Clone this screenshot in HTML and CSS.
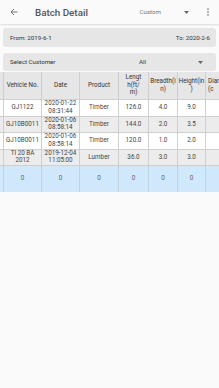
FILE: index.html
```html
<!DOCTYPE html>
<html>
<head>
<meta charset="utf-8">
<link rel="stylesheet" href="styles.css">
</head>
<body>
<div class="app">
  <header class="appbar">
    <svg class="back" width="8" height="8" viewBox="0 0 8 8"><path d="M7.5 4H1M4 1L1 4l3 3" fill="none" stroke="#666" stroke-width="0.9"/></svg>
    <h1 class="title">Batch Detail</h1>
    <span class="custom">Custom</span>
    <svg class="tri" width="5" height="3" viewBox="0 0 5 3"><path d="M0 0h5L2.5 3z" fill="#666"/></svg>
    <svg class="dots" width="2" height="8" viewBox="0 0 2 8"><circle cx="1" cy="1" r="0.8" fill="#666"/><circle cx="1" cy="4" r="0.8" fill="#666"/><circle cx="1" cy="7" r="0.8" fill="#666"/></svg>
  </header>

  <div class="bar bar-date">
    <span>From: 2019-6-1</span>
    <span>To: 2020-2-6</span>
  </div>
  <div class="bar bar-select">
    <span class="sel-label">Select Customer</span>
    <span class="sel-value">All</span>
    <svg class="tri" width="5" height="3" viewBox="0 0 5 3"><path d="M0 0h5L2.5 3z" fill="#666"/></svg>
  </div>

  <div class="table">
    <div class="row head">
      <div class="cell">Vehicle No.</div>
      <div class="cell">Date</div>
      <div class="cell">Product</div>
      <div class="cell">Lengt<br>h(ft/<br>m)</div>
      <div class="cell">Breadth(i<br>n)</div>
      <div class="cell">Height(in<br>)</div>
      <div class="cell left">Diar<br>(c</div>
    </div>
    <div class="row">
      <div class="cell">GJ1122</div>
      <div class="cell">2020-01-22<br>08:31:44</div>
      <div class="cell">Timber</div>
      <div class="cell">126.0</div>
      <div class="cell">4.0</div>
      <div class="cell">9.0</div>
      <div class="cell"></div>
    </div>
    <div class="row alt">
      <div class="cell">GJ10B0011</div>
      <div class="cell">2020-01-06<br>08:58:14</div>
      <div class="cell">Timber</div>
      <div class="cell">144.0</div>
      <div class="cell">2.0</div>
      <div class="cell">3.5</div>
      <div class="cell"></div>
    </div>
    <div class="row">
      <div class="cell">GJ10B0011</div>
      <div class="cell">2020-01-06<br>08:58:14</div>
      <div class="cell">Timber</div>
      <div class="cell">120.0</div>
      <div class="cell">1.0</div>
      <div class="cell">2.0</div>
      <div class="cell"></div>
    </div>
    <div class="row alt">
      <div class="cell">TI 20 BA<br>2012</div>
      <div class="cell">2019-12-04<br>11:05:00</div>
      <div class="cell">Lumber</div>
      <div class="cell">36.0</div>
      <div class="cell">3.0</div>
      <div class="cell">3.0</div>
      <div class="cell"></div>
    </div>
    <div class="row total">
      <div class="cell">0</div>
      <div class="cell">0</div>
      <div class="cell">0</div>
      <div class="cell">0</div>
      <div class="cell">0</div>
      <div class="cell">0</div>
      <div class="cell"></div>
    </div>
  </div>
</div>
</body>
</html>
```

FILE: styles.css
```css
* { box-sizing: border-box; }
html, body { margin: 0; padding: 0; }
body {
  background: #fafafa;
  font-family: Roboto, "Liberation Sans", sans-serif;
  width: 219px;
  height: 388px;
  overflow: hidden;
}
.app { width: 219px; overflow: hidden; }

.appbar {
  height: 24px;
  display: flex;
  align-items: center;
  padding-left: 10px;
  background: #fafafa;
  box-shadow: 0 1px 1.5px rgba(0,0,0,0.12);
  position: relative;
}
.back { flex: none; margin-right: 17px; }
.title {
  flex: 1;
  margin: 0;
  font-size: 9.8px;
  font-weight: 500;
  color: #555;
}
.custom { font-size: 6.2px; color: #777; margin-right: 23px; }
.appbar .tri { flex: none; margin-right: 18px; }
.dots { flex: none; margin-right: 10px; }

.bar {
  margin: 0 3px;
  background: #e6e6e6;
  border-radius: 3px;
  display: flex;
  align-items: center;
  font-size: 6.2px;
  color: #333;
  padding: 0 6px 0 7px;
}
.bar-date {
  margin-top: 4px;
  height: 19px;
  justify-content: space-between;
}
.bar-select {
  margin-top: 6px;
  height: 18px;
}
.sel-label { width: 129px; flex: none; }
.sel-value { flex: 1; }
.bar-select .tri { margin-right: 7px; }

.table { margin-top: 1px; }
.row {
  display: grid;
  grid-template-columns: 38px 38px 39px 30px 29px 28px 40px;
  padding-left: 3px;
  width: 245px;
  background: #fff;
  border-bottom: 1px solid #cfcfcf;
  font-size: 6.3px;
  line-height: 7.5px;
  color: #444;
}
.row.head { background: #e6e6e6; height: 28px; color: #333; }
.row.alt { background: #ececec; }
.row.total { background: #cfe8fb; height: 26px; color: #666; border-bottom: none; }
.row:not(.head):not(.total) { height: 16.5px; }
.cell {
  border-left: 1px solid #cfcfcf;
  display: flex;
  align-items: center;
  justify-content: center;
  text-align: center;
  overflow: hidden;
  white-space: nowrap;
}
.cell.left { justify-content: flex-start; text-align: left; padding-left: 2px; }
.row.total .cell { border-left: 1px solid #c3d3de; }
```
